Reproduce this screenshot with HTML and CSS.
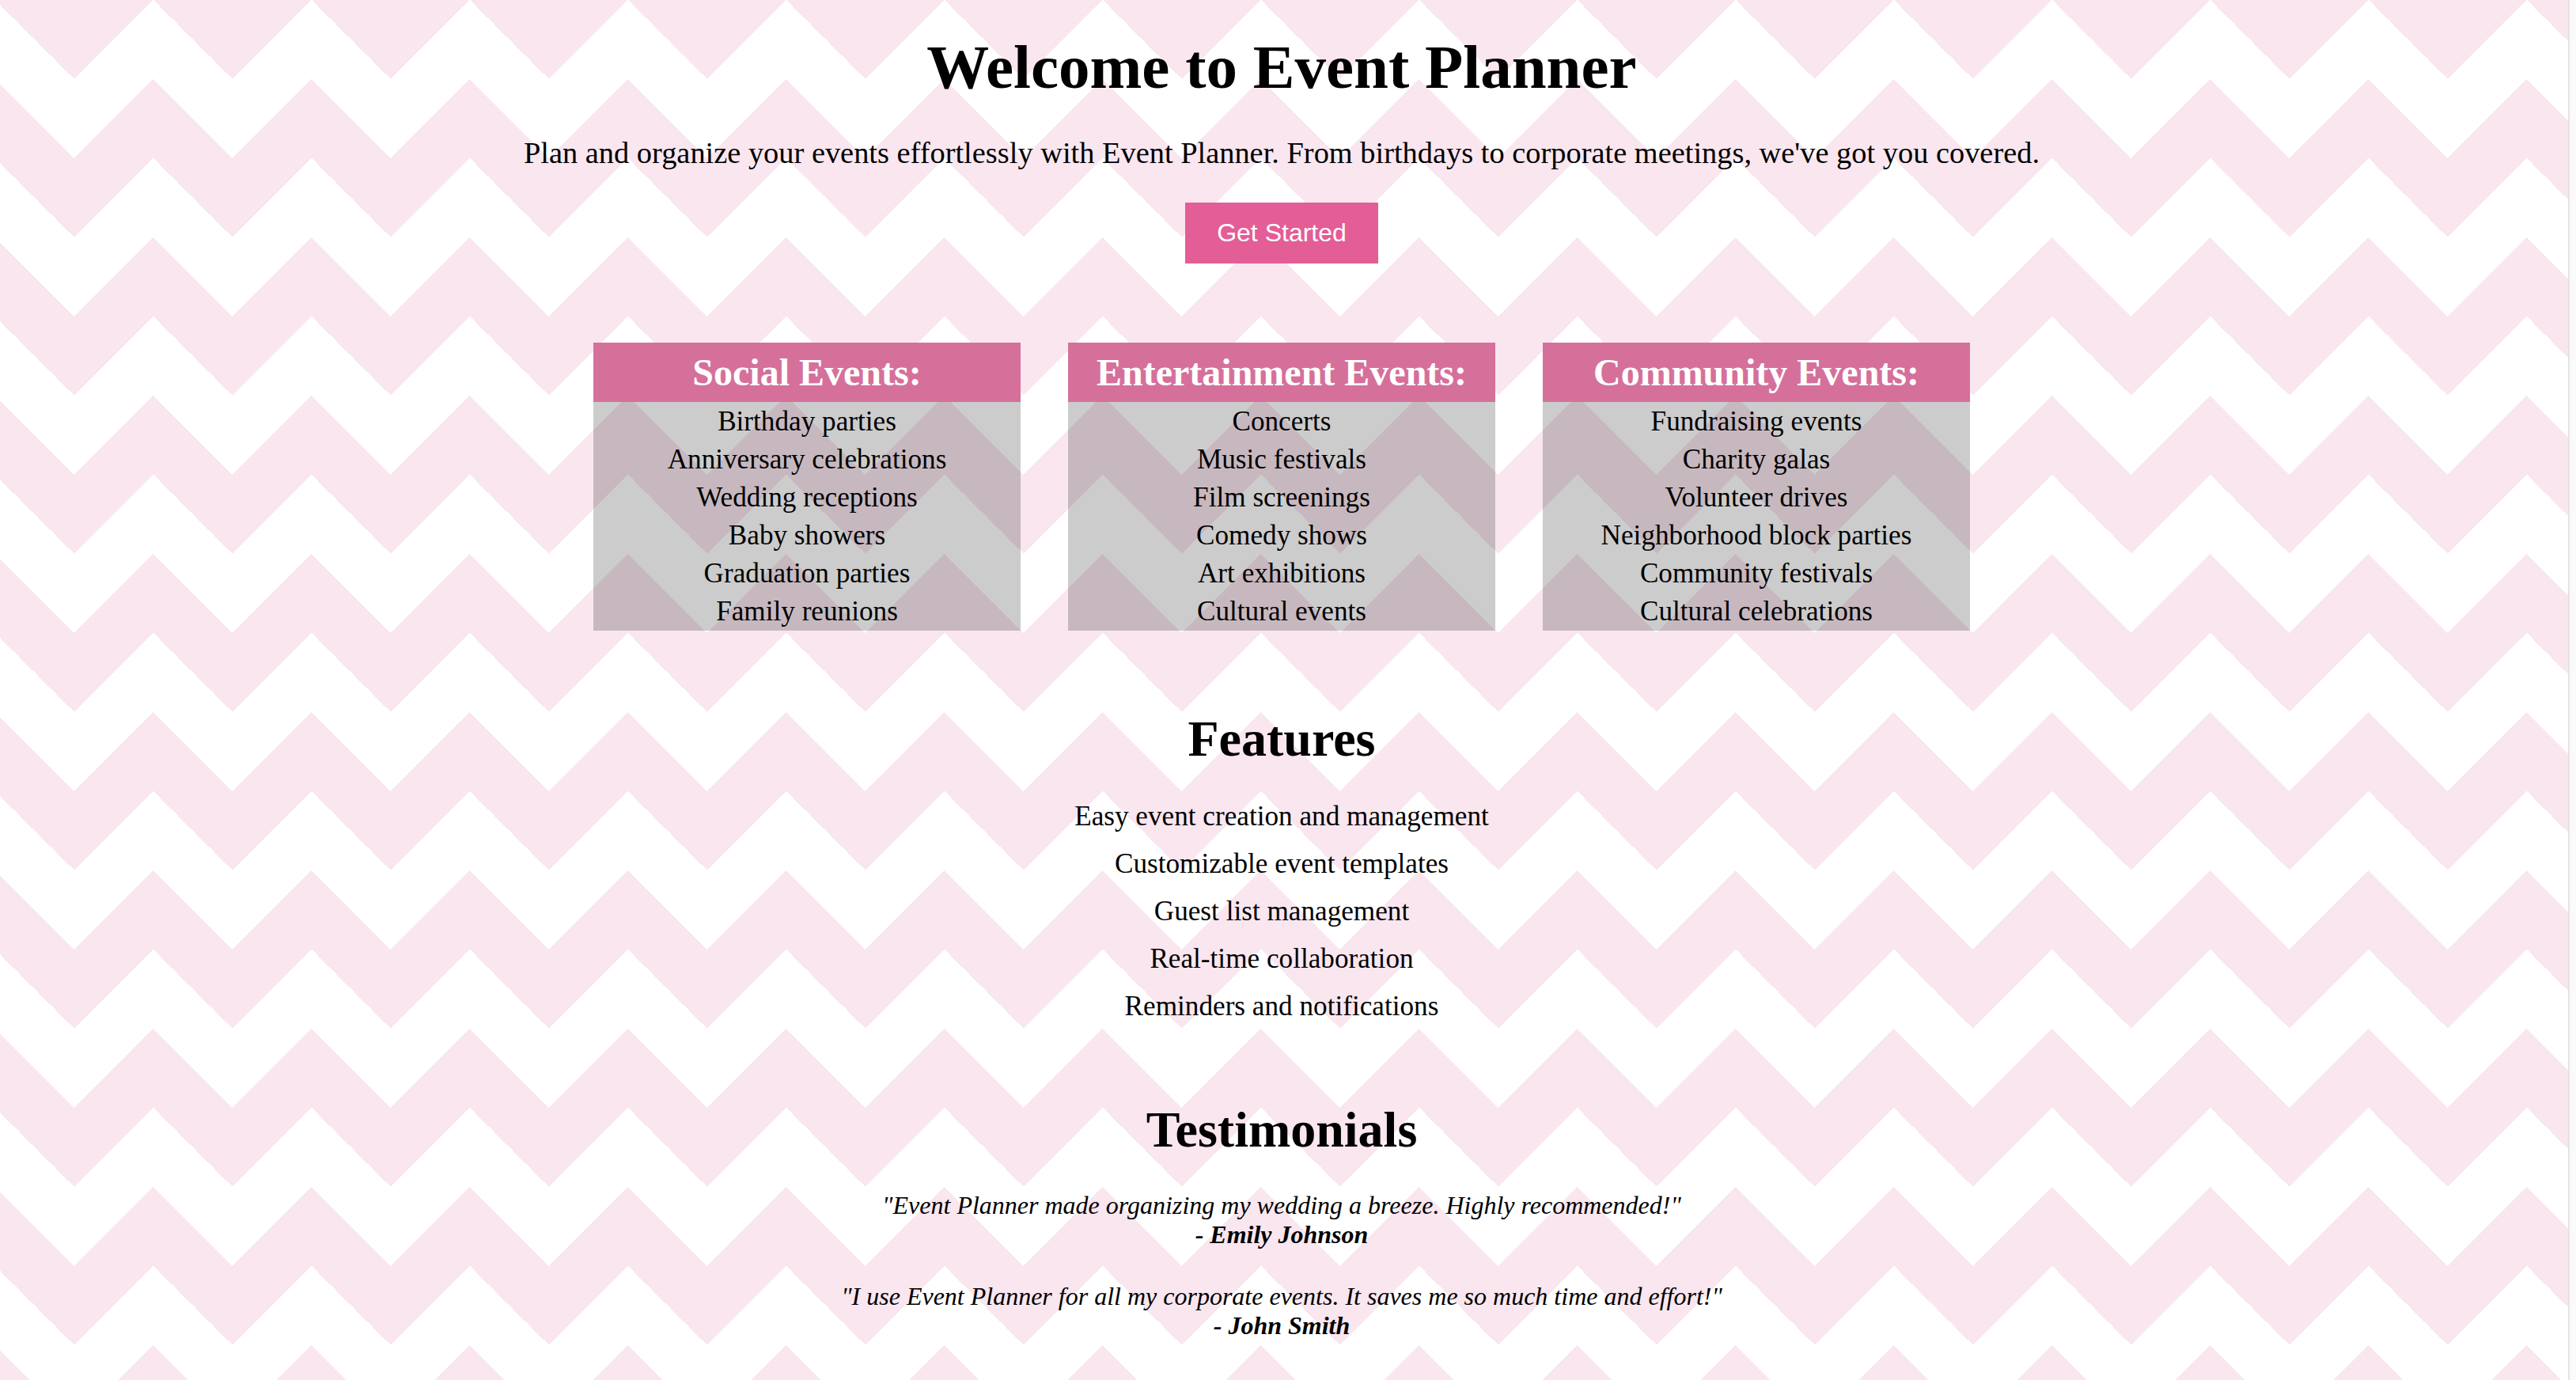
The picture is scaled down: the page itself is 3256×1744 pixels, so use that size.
FILE: index.html
```html
<!DOCTYPE html>
<html lang="en">
<head>
<meta charset="utf-8">
<title>Event Planner</title>
<link rel="stylesheet" href="styles.css">
</head>
<body>
<div class="page">
  <main class="content">
    <header class="hero">
      <h1 class="hero-title">Welcome to Event Planner</h1>
      <p class="hero-text">Plan and organize your events effortlessly with Event Planner. From birthdays to corporate meetings, we've got you covered.</p>
      <a class="btn" href="#">Get Started</a>
    </header>

    <section class="categories">
      <div class="card">
        <h2 class="card-title">Social Events:</h2>
        <ul class="card-list">
          <li>Birthday parties</li>
          <li>Anniversary celebrations</li>
          <li>Wedding receptions</li>
          <li>Baby showers</li>
          <li>Graduation parties</li>
          <li>Family reunions</li>
        </ul>
      </div>
      <div class="card">
        <h2 class="card-title">Entertainment Events:</h2>
        <ul class="card-list">
          <li>Concerts</li>
          <li>Music festivals</li>
          <li>Film screenings</li>
          <li>Comedy shows</li>
          <li>Art exhibitions</li>
          <li>Cultural events</li>
        </ul>
      </div>
      <div class="card">
        <h2 class="card-title">Community Events:</h2>
        <ul class="card-list">
          <li>Fundraising events</li>
          <li>Charity galas</li>
          <li>Volunteer drives</li>
          <li>Neighborhood block parties</li>
          <li>Community festivals</li>
          <li>Cultural celebrations</li>
        </ul>
      </div>
    </section>

    <section class="features">
      <h2 class="section-title">Features</h2>
      <ul class="feature-list">
        <li>Easy event creation and management</li>
        <li>Customizable event templates</li>
        <li>Guest list management</li>
        <li>Real-time collaboration</li>
        <li>Reminders and notifications</li>
      </ul>
    </section>

    <section class="testimonials">
      <h2 class="section-title">Testimonials</h2>
      <div class="testimonial-list">
        <div class="testimonial">
          <p class="quote">"Event Planner made organizing my wedding a breeze. Highly recommended!"</p>
          <p class="author">- Emily Johnson</p>
        </div>
        <div class="testimonial">
          <p class="quote">"I use Event Planner for all my corporate events. It saves me so much time and effort!"</p>
          <p class="author">- John Smith</p>
        </div>
      </div>
    </section>
  </main>
  <div class="scrollbar"></div>
</div>
</body>
</html>
```

FILE: styles.css
```css
html {
  margin: 0;
  height: 100%;
  overflow: hidden;
  background-color: #ffffff;
  background-image:
    linear-gradient(135deg, #f9e6ef 25%, transparent 25%),
    linear-gradient(225deg, #f9e6ef 25%, transparent 25%),
    linear-gradient(315deg, #f9e6ef 25%, transparent 25%),
    linear-gradient(45deg, #f9e6ef 25%, transparent 25%);
  background-size: 200px 200px;
  background-position: 94px 0, 94px 0, 194px 0, 194px 0;
}

body {
  margin: 0;
  min-height: 100%;
  font-family: "Liberation Serif", "Times New Roman", serif;
  font-size: 32px;
  color: #000;
}

.page {
  display: flex;
  min-height: 100vh;
}

.content {
  flex: 1;
  display: flex;
  flex-direction: column;
  align-items: center;
  text-align: center;
  padding-top: 40px;
}

.scrollbar {
  width: 16px;
  flex: none;
  background: linear-gradient(to right, transparent 0, transparent 6px, #e4e4e4 6px, #e4e4e4 8px, #fafafa 8px);
}

/* hero */
.hero {
  display: flex;
  flex-direction: column;
  align-items: center;
}

.hero-title {
  margin: 0;
  font-size: 79px;
  font-weight: bold;
}

.hero-text {
  margin: 41px 0 0;
  font-size: 38.4px;
}

.btn {
  margin-top: 41px;
  display: block;
  padding: 20px 40px;
  background: #e35d96;
  color: #fff;
  text-decoration: none;
  font-family: "Liberation Sans", Arial, sans-serif;
  font-size: 32px;
  line-height: 37px;
}

/* category cards */
.categories {
  margin-top: 100px;
  display: flex;
  justify-content: center;
  gap: 60px;
}

.card {
  width: 540px;
  background: rgba(0, 0, 0, 0.2);
}

.card-title {
  margin: 0;
  padding: 10px 0;
  background: #d5709b;
  color: #fff;
  font-size: 48px;
  line-height: 55px;
}

.card-list {
  margin: 0;
  padding: 1px 0 0;
  list-style: none;
  font-size: 35.2px;
  line-height: 48px;
}

/* sections */
.section-title {
  margin: 0;
  font-size: 64px;
  font-weight: bold;
}

.features {
  margin-top: 100px;
}

.feature-list {
  margin: 41px 0 0;
  padding: 0;
  list-style: none;
  display: flex;
  flex-direction: column;
  gap: 20px;
  font-size: 35.2px;
  line-height: 40px;
}

.testimonials {
  margin-top: 99px;
}

.testimonial-list {
  margin-top: 40px;
  display: flex;
  flex-direction: column;
  gap: 41px;
}

.quote,
.author {
  margin: 0;
  font-size: 32px;
  line-height: 37px;
  font-style: italic;
}

.author {
  font-weight: bold;
}
```
